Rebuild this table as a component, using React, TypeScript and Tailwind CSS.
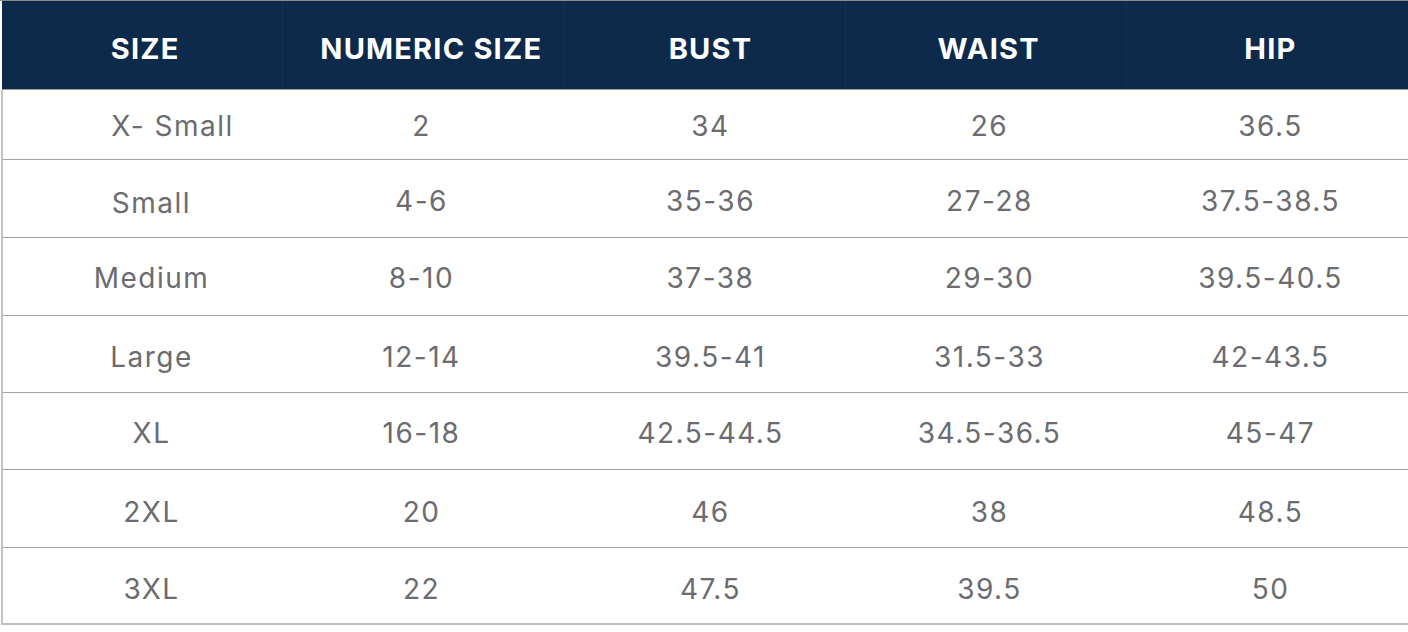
import React from "react";

const rows: { cells: string[]; h: string; pt: string }[] = [
  { cells: ["X- Small", "2", "34", "26", "36.5"], h: "h-[70px]", pt: "pt-[2px]" },
  { cells: ["Small", "4-6", "35-36", "27-28", "37.5-38.5"], h: "h-[78px]", pt: "pt-[4px]" },
  { cells: ["Medium", "8-10", "37-38", "29-30", "39.5-40.5"], h: "h-[78px]", pt: "pt-[2px]" },
  { cells: ["Large", "12-14", "39.5-41", "31.5-33", "42-43.5"], h: "h-[77px]", pt: "pt-[6px]" },
  { cells: ["XL", "16-18", "42.5-44.5", "34.5-36.5", "45-47"], h: "h-[77px]", pt: "pt-[4px]" },
  { cells: ["2XL", "20", "46", "38", "48.5"], h: "h-[78px]", pt: "pt-[6px]" },
  { cells: ["3XL", "22", "47.5", "39.5", "50"], h: "h-[77px]", pt: "pt-[6px]" },
];

const headers = ["SIZE", "NUMERIC SIZE", "BUST", "WAIST", "HIP"];
const headerPad = ["pl-[6px]", "pl-[16px]", "pl-[12px]", "pl-[6px]", "pl-[6px]"];
const colPad = ["", "pr-[6px]", "pl-[10px]", "pl-[6px]", "pl-[6px]"];

export default function App() {
  return (
    <div
      className="w-[1408px] h-[632px] bg-white overflow-hidden"
      style={{ fontFamily: "Inter, 'Open Sans', sans-serif" }}
    >
      <div className="border-t border-[#8a8a8a]">
        <div className="grid grid-cols-5 h-[89px] bg-[#0d2a4b] ml-[2px] border-b border-[#9a9a9a]">
          {headers.map((h, i) => (
            <div
              key={h}
              className={
                "flex items-center justify-center pt-[7px] text-white font-bold text-[29px] tracking-[1.2px] " +
                headerPad[i] +
                (i < 4 ? " border-r border-[#142f4f]" : "")
              }
            >
              {h}
            </div>
          ))}
        </div>
        <div className="ml-[1px] border-l-2 border-[#c2c2c2]">
          {rows.map((r, ri) => (
            <div
              key={ri}
              className={
                "grid grid-cols-5 border-b " +
                r.h +
                (ri === rows.length - 1 ? " border-b-2 border-[#bdbdbd]" : " border-[#a3a3a3]")
              }
            >
              {r.cells.map((c, ci) => {
                let extra = colPad[ci];
                if (ci === 0) {
                  if (ri === 0) extra = "pl-[58px]";
                  else if (ri === 1) extra = "pl-[16px] pt-[8px]";
                  else extra = "pl-[16px]";
                }
                return (
                  <div
                    key={ci}
                    className={
                      "flex items-center justify-center text-[28px] tracking-[1.5px] text-[#6b6b70] " +
                      r.pt +
                      " " +
                      extra
                    }
                  >
                    {c}
                  </div>
                );
              })}
            </div>
          ))}
        </div>
      </div>
    </div>
  );
}
